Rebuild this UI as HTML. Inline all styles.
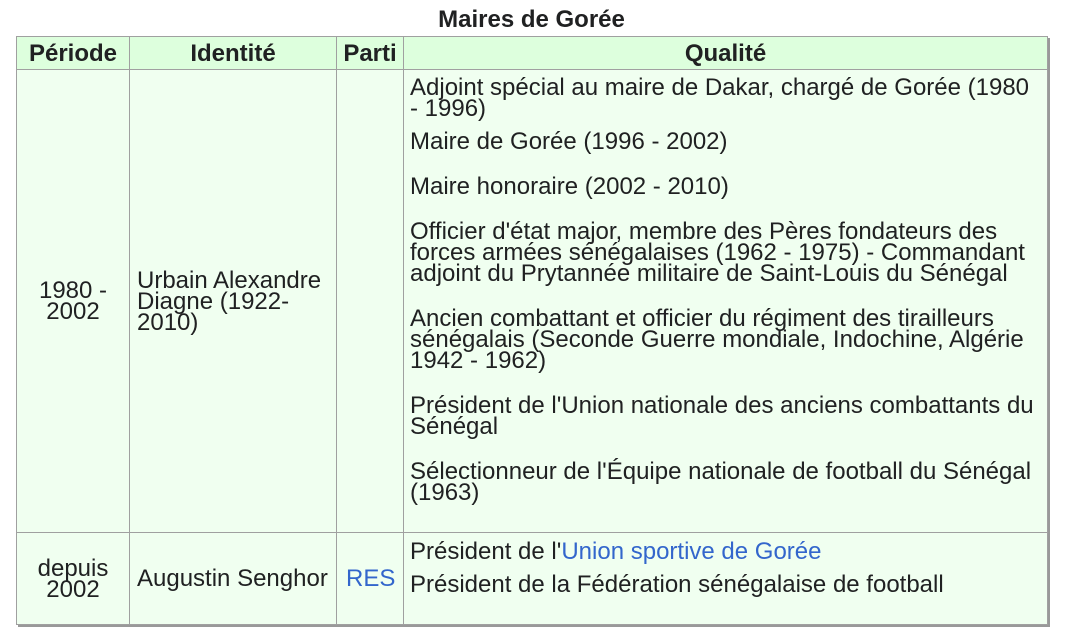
<!DOCTYPE html>
<html><head><meta charset="utf-8"><style>
body{margin:0;background:#fff;font-family:"Liberation Sans",sans-serif;color:#202122;}
.cap{position:absolute;left:16px;width:1031px;top:8px;text-align:center;font-weight:bold;font-size:24px;line-height:24px;}
table{position:absolute;left:16px;top:36px;border-collapse:collapse;table-layout:fixed;width:1031px;background:#f0fff0;box-shadow:2px 2px 0 #999;font-size:24px;line-height:21px;}
td,th{border:1px solid #a0a0a0;padding:0 6px;vertical-align:middle;overflow:visible;}
th{background:#ddffdd;height:32px;font-weight:bold;padding:0 2px;}
p{margin:0;}
.q{vertical-align:top;}
.q p{margin:0 0 24px 0;}
.q p.f{margin-bottom:12px;}
.q p:last-child{margin-bottom:0;}
a{color:#3366cc;text-decoration:none;}
</style></head><body>
<div class="cap">Maires de Gorée</div>
<table>
<colgroup><col style="width:113px"><col style="width:207px"><col style="width:67px"><col style="width:644px"></colgroup>
<tr><th>Période</th><th>Identité</th><th>Parti</th><th>Qualité</th></tr>
<tr style="height:463px"><td style="text-align:center">1980 - 2002</td><td style="padding-left:7px">Urbain Alexandre Diagne (1922-2010)</td><td></td><td class="q" style="padding-top:7px">
<p class="f">Adjoint spécial au maire de Dakar, chargé de Gorée (1980 - 1996)</p>
<p>Maire de Gorée (1996 - 2002)</p>
<p>Maire honoraire (2002 - 2010)</p>
<p>Officier d'état major, membre des Pères fondateurs des forces armées sénégalaises (1962 - 1975) - Commandant adjoint du Prytannée militaire de Saint-Louis du Sénégal</p>
<p>Ancien combattant et officier du régiment des tirailleurs sénégalais (Seconde Guerre mondiale, Indochine, Algérie 1942 - 1962)</p>
<p>Président de l'Union nationale des anciens combattants du Sénégal</p>
<p>Sélectionneur de l'Équipe nationale de football du Sénégal (1963)</p>
</td></tr>
<tr style="height:92px"><td style="text-align:center">depuis 2002</td><td style="padding-left:7px">Augustin Senghor</td><td style="padding-left:9px"><a>RES</a></td><td class="q" style="padding-top:8px">
<p class="f">Président de l'<a>Union sportive de Gorée</a></p>
<p>Président de la Fédération sénégalaise de football</p>
</td></tr>
</table>
</body></html>
